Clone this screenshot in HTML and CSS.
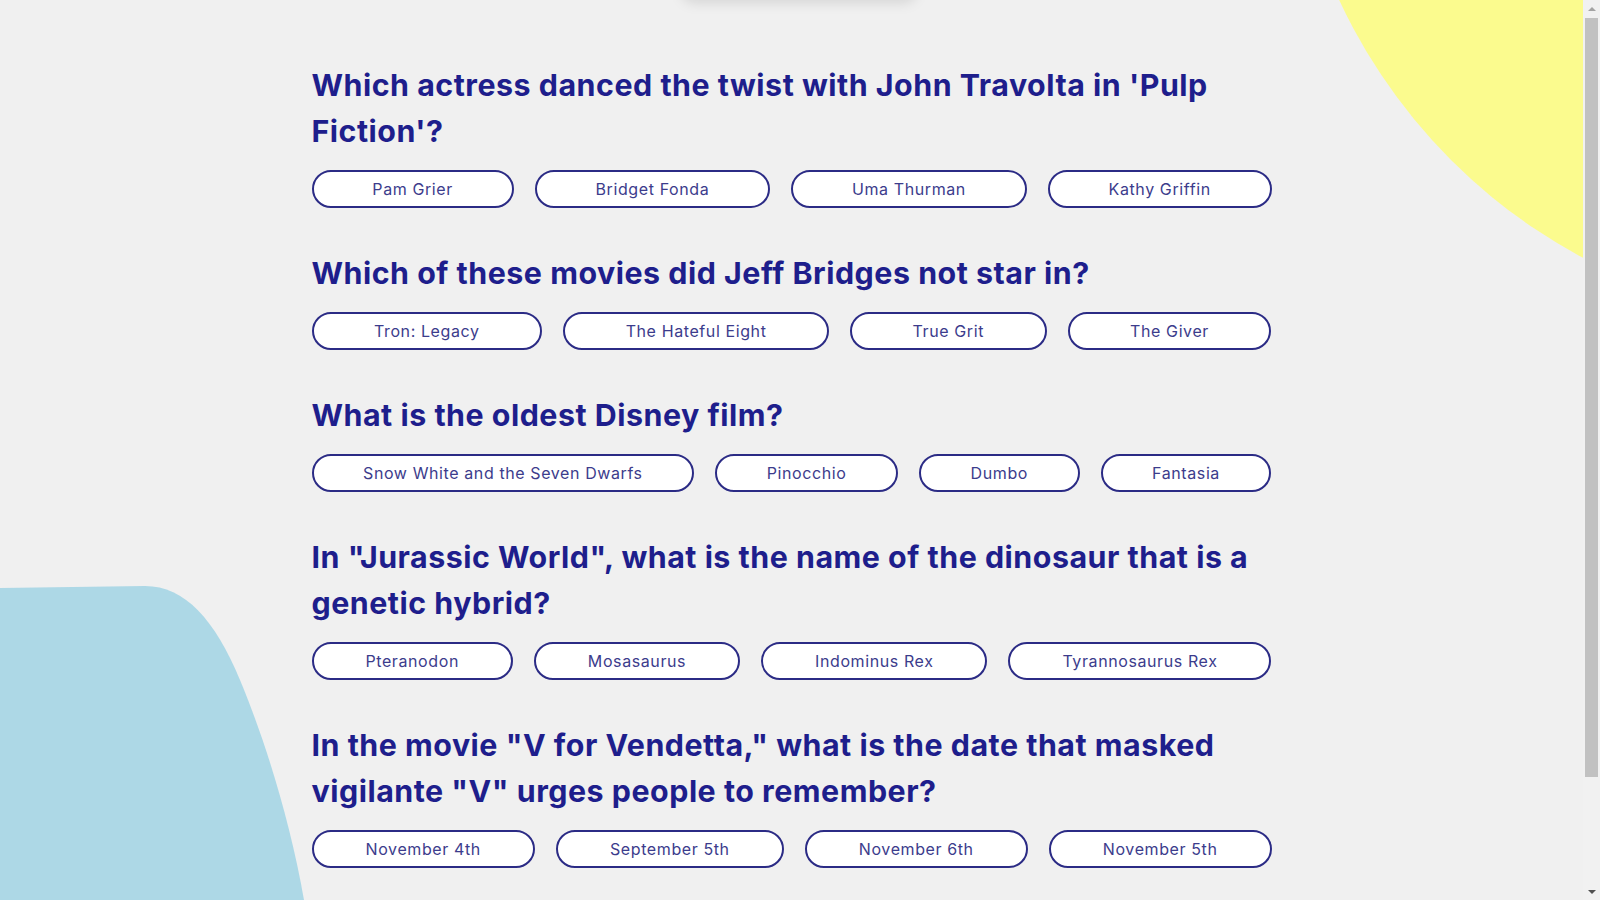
FILE: index.html
```html
<!DOCTYPE html>
<html lang="en">
<head>
<meta charset="utf-8">
<title>Movie Quiz</title>
<link rel="stylesheet" href="styles.css">
</head>
<body>
<div class="page">
  <div class="canvas">
    <div class="backdrop" aria-hidden="true">
      <div class="blob-yellow"></div>
      <svg class="blob-blue" width="330" height="441" viewBox="0 0 330 441">
        <path d="M0 2 L145 0 C185 0 215 34 240 94 C265 154 290 234 304 314 L318 441 L0 441 Z" fill="#add8e6"/>
      </svg>
    </div>
    <div class="top-card" aria-hidden="true"></div>
    <main class="quiz">
      <section class="question">
        <h2 class="question-title">Which actress danced the twist with John Travolta in 'Pulp Fiction'?</h2>
        <div class="answers">
          <button class="answer">Pam Grier</button>
          <button class="answer">Bridget Fonda</button>
          <button class="answer">Uma Thurman</button>
          <button class="answer">Kathy Griffin</button>
        </div>
      </section>
      <section class="question">
        <h2 class="question-title">Which of these movies did Jeff Bridges not star in?</h2>
        <div class="answers">
          <button class="answer">Tron: Legacy</button>
          <button class="answer">The Hateful Eight</button>
          <button class="answer">True Grit</button>
          <button class="answer">The Giver</button>
        </div>
      </section>
      <section class="question">
        <h2 class="question-title">What is the oldest Disney film?</h2>
        <div class="answers">
          <button class="answer">Snow White and the Seven Dwarfs</button>
          <button class="answer">Pinocchio</button>
          <button class="answer">Dumbo</button>
          <button class="answer">Fantasia</button>
        </div>
      </section>
      <section class="question">
        <h2 class="question-title">In "Jurassic World", what is the name of the dinosaur that is a genetic hybrid?</h2>
        <div class="answers">
          <button class="answer">Pteranodon</button>
          <button class="answer">Mosasaurus</button>
          <button class="answer">Indominus Rex</button>
          <button class="answer">Tyrannosaurus Rex</button>
        </div>
      </section>
      <section class="question">
        <h2 class="question-title">In the movie "V for Vendetta," what is the date that masked vigilante "V" urges people to remember?</h2>
        <div class="answers">
          <button class="answer">November 4th</button>
          <button class="answer">September 5th</button>
          <button class="answer">November 6th</button>
          <button class="answer">November 5th</button>
        </div>
      </section>
    </main>
  </div>
</div>
<div class="scrollbar" aria-hidden="true">
  <div class="sb-button"><span class="sb-arrow sb-up"></span></div>
  <div class="sb-track"><div class="sb-thumb"></div></div>
  <div class="sb-button"><span class="sb-arrow sb-down"></span></div>
</div>
</body>
</html>
```
FILE: styles.css
```css
html, body {
  margin: 0;
  padding: 0;
  height: 100%;
}

body {
  background: #f0f0f0;
  font-family: Inter, "Noto Sans", sans-serif;
  overflow: hidden;
}

.page {
  width: calc(100% - 17px);
  height: 100%;
  overflow-x: hidden;
  overflow-y: auto;
  scrollbar-width: none;
}

.page::-webkit-scrollbar {
  display: none;
}

.canvas {
  position: relative;
}

.backdrop {
  position: absolute;
  inset: 0;
  overflow: hidden;
  z-index: 0;
}

.blob-yellow {
  position: absolute;
  top: -796px;
  right: -824px;
  width: 1120px;
  height: 1120px;
  border-radius: 50%;
  background: #fbfb8e;
}

.blob-blue {
  position: absolute;
  top: 586px;
  left: 0;
  display: block;
}

.top-card {
  position: absolute;
  top: -50px;
  left: 682px;
  width: 234px;
  height: 50px;
  border-radius: 12px;
  background: #f0f0f0;
  box-shadow: 0 2px 14px rgba(0, 0, 0, 0.13);
  z-index: 1;
}

.quiz {
  position: relative;
  z-index: 1;
  width: 960px;
  margin: 0 auto;
  padding: 62px 0 117px;
}

.question {
  margin-bottom: 42px;
}

.question-title {
  margin: 0 0 16px;
  font-family: Inter, "Noto Sans", sans-serif;
  font-weight: 700;
  font-size: 30.4px;
  line-height: 46px;
  letter-spacing: 0.5px;
  color: #1e1e8c;
}

.answers {
  display: flex;
  gap: 21px;
}

.answer {
  flex: 1 1 auto;
  padding: 5px 16px;
  border: 2px solid #2b2b85;
  border-radius: 20px;
  background: #fff;
  font-family: Inter, "Noto Sans", sans-serif;
  font-weight: 400;
  font-size: 16px;
  line-height: 24px;
  letter-spacing: 0.6px;
  color: #3c3c8c;
  cursor: pointer;
  white-space: nowrap;
}

/* classic scrollbar drawn over the right edge */
.scrollbar {
  position: fixed;
  top: 0;
  right: 0;
  width: 17px;
  height: 100%;
  display: flex;
  flex-direction: column;
  background: #f1f1f1;
  z-index: 10;
}

.sb-button {
  flex: 0 0 17px;
  display: flex;
  align-items: center;
  justify-content: center;
}

.sb-track {
  flex: 1 1 auto;
}

.sb-thumb {
  height: 759px;
  margin: 1px 2px 0;
  background: #c1c1c1;
}

.sb-arrow {
  width: 0;
  height: 0;
  border-left: 4px solid transparent;
  border-right: 4px solid transparent;
}

.sb-up {
  border-bottom: 4px solid #a3a3a3;
}

.sb-down {
  border-top: 4px solid #505050;
}
```
